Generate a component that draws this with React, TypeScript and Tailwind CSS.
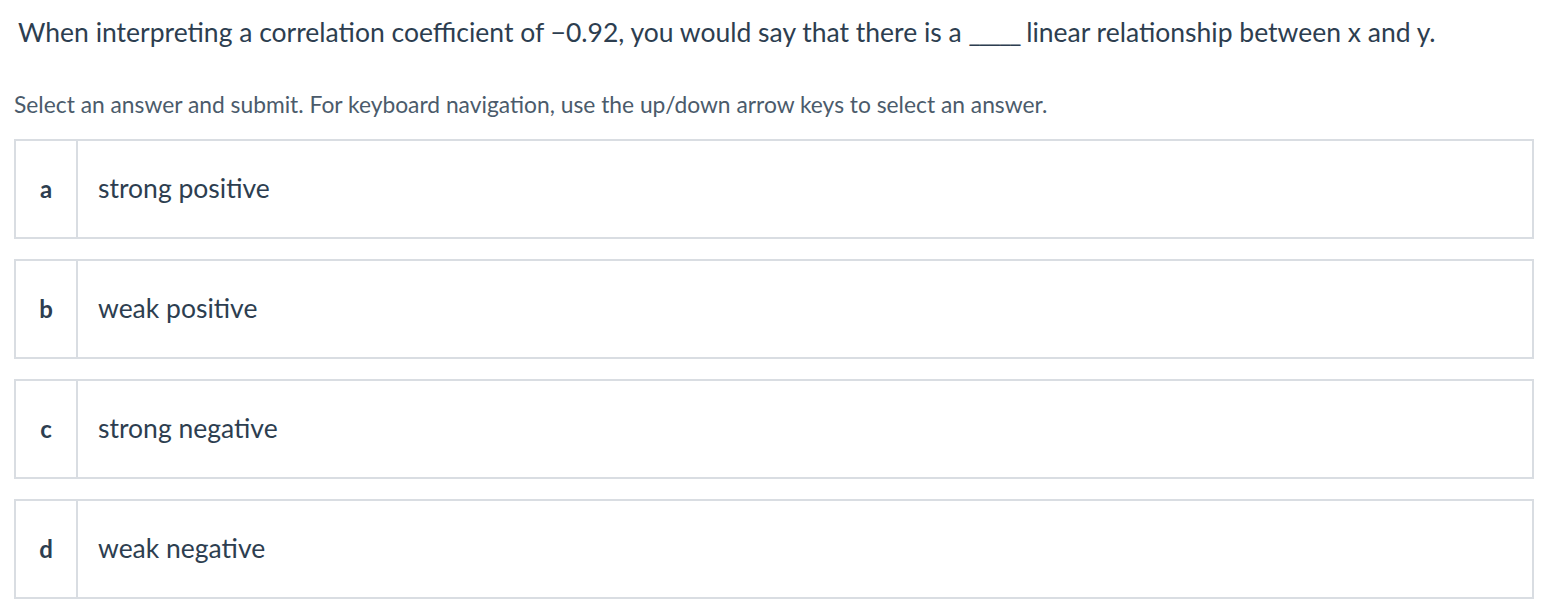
const options = [
	{ key: "a", label: "strong positive" },
	{ key: "b", label: "weak positive" },
	{ key: "c", label: "strong negative" },
	{ key: "d", label: "weak negative" },
];

export default function App() {
	return (
		<div
			className="w-[1556px] h-[612px] bg-white text-[#2d3e50]"
			style={{ fontFamily: "Lato, 'Noto Sans', sans-serif" }}
		>
			<div className="pl-[18px] pt-[14px]">
				<p className="text-[26.5px] leading-[36px]">
					When interpreting a correlation coefficient of −0.92, you would say that there is a{" "}
					<span className="tracking-[-2px]">_____</span> linear relationship between x and y.
				</p>
			</div>
			<p className="pl-[14px] mt-[40px] text-[22.8px] leading-[28px] text-[#4b5b6b]">
				Select an answer and submit. For keyboard navigation, use the up/down arrow keys to select an answer.
			</p>
			<div className="mt-[21px] ml-[14px] w-[1520px] flex flex-col gap-[20px]">
				{options.map((o) => (
					<div key={o.key} className="flex h-[100px] border-2 border-[#d9dde2] bg-white">
						<div className="w-[62px] flex items-center justify-center border-r-2 border-[#d9dde2] text-[24px] font-bold">
							{o.key}
						</div>
						<div className="flex items-center pl-[20px] text-[26.5px]">{o.label}</div>
					</div>
				))}
			</div>
		</div>
	);
}
